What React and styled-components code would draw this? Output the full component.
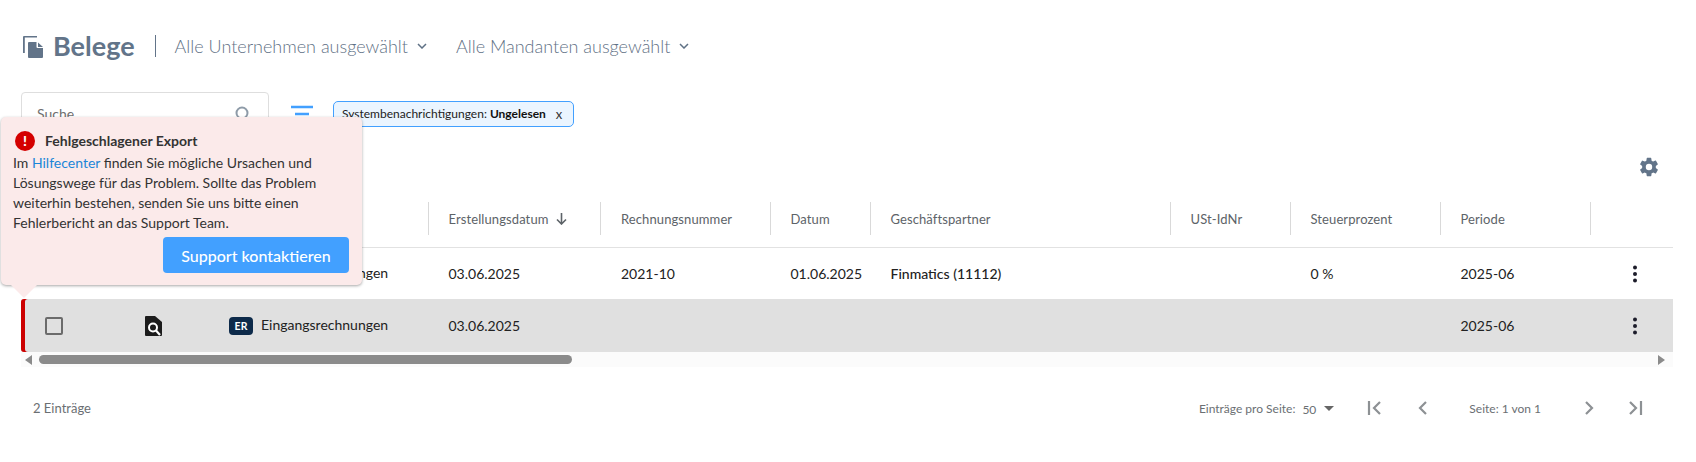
import React from "react";
import styled, { createGlobalStyle } from "styled-components";

const Global = createGlobalStyle`
  html, body { margin: 0; padding: 0; background: #fff; }
  body { font-family: Lato, "Open Sans", sans-serif; overflow: hidden; }
  * { box-sizing: border-box; }
`;

const Page = styled.div`
  position: relative;
  width: 1696px;
  height: 462px;
  padding: 0 23px 0 21px;
`;
const TitleBar = styled.header`
  display: flex;
  align-items: center;
  height: 92px;
  padding-left: 2px;
`;
const TitleIcon = styled.svg`
  width: 21px;
  height: 22px;
  margin: 2px 9px 0 0;
  fill: #627489;
`;
const Title = styled.h1`
  margin: 0 20px 0 0;
  font-size: 27px;
  font-weight: 700;
  color: #627489;
  line-height: 34px;
`;
const Divider = styled.span`
  width: 1px;
  height: 22px;
  background: #627489;
  margin-right: 19px;
`;
const Picker = styled.button`
  display: flex;
  align-items: center;
  gap: 9px;
  border: 0;
  background: none;
  padding: 0;
  margin-right: 29px;
  font: 300 18px Lato, sans-serif;
  color: #5f7185;
`;
const Toolbar = styled.div`
  display: flex;
  align-items: center;
  height: 43px;
`;
const Search = styled.div`
  width: 248px;
  height: 46px;
  margin-top: 2px;
  border: 1px solid #dedede;
  border-radius: 4px;
  display: flex;
  align-items: center;
  justify-content: space-between;
  padding: 0 17px 2px 15px;
  font-size: 14px;
  color: #6f6f6f;
`;
const FilterIcon = styled.svg`
  width: 22px;
  height: 18px;
  margin: 0 20px 0 22px;
`;
const Chip = styled.div`
  display: flex;
  align-items: center;
  height: 26px;
  padding: 0 11px 0 8px;
  border: 1px solid #42a0ff;
  border-radius: 5px;
  background: #ebf5ff;
  font-size: 12px;
  color: #222;
  b { font-weight: 700; margin-left: 3px; color: #111; }
`;
const ChipClose = styled.span`
  margin-left: 10px;
  font-size: 13px;
  color: #333;
`;
const SettingsRow = styled.div`
  display: flex;
  justify-content: flex-end;
  height: 67px;
  padding: 21px 13px 0 0;
`;
const Grid = "407.5px 172.5px 169.5px 100px 300px 120px 150px 150px 82px";
const HeadRow = styled.div`
  display: grid;
  grid-template-columns: ${Grid};
  height: 46px;
  border-bottom: 1.5px solid #e2e2e2;
  align-items: start;
`;
const HeadCell = styled.div`
  height: 33px;
  padding-left: 20px;
  border-right: ${p => (p.$last ? "0" : "1px solid #d9d9d9")};
  display: flex;
  align-items: center;
  gap: 7px;
  font-size: 13px;
  letter-spacing: 0.1px;
  color: #5d6368;
`;
const Row = styled.div`
  display: grid;
  grid-template-columns: ${Grid};
  height: ${p => p.$h}px;
  align-items: center;
  background: ${p => (p.$error ? "#e0e0e0" : "#fff")};
  font-size: 14px;
  color: #222;
  box-shadow: ${p => (p.$error ? "inset 4px 0 0 #cc0000" : "none")};
  border-radius: ${p => (p.$error ? "3px 0 0 3px" : "0")};
`;
const Cell = styled.div`
  padding-left: 20px;
  font-weight: ${p => (p.$strong ? 500 : 400)};
  white-space: nowrap;
`;
const Lead = styled.div`
  display: flex;
  align-items: center;
  height: 100%;
`;
const Check = styled.span`
  width: 18px;
  height: 18px;
  margin-left: 24px;
  border: 2px solid #6b6b6b;
  border-radius: 2px;
`;
const DocIcon = styled.svg`
  width: 17px;
  height: 20px;
  margin-left: 82px;
`;
const Badge = styled.span`
  width: 24px;
  height: 18px;
  margin-left: 67px;
  border-radius: 4px;
  background: #0d2a4a;
  color: #fff;
  font-size: 10.5px;
  font-weight: 700;
  display: flex;
  align-items: center;
  justify-content: center;
`;
const TypeLabel = styled.span`
  margin-left: 8px;
  margin-top: -2px;
`;
const Kebab = styled.svg`
  width: 4px;
  height: 18px;
  margin-left: 42px;
  fill: #1c1c2a;
`;
const ScrollTrack = styled.div`
  display: flex;
  align-items: center;
  height: 15px;
  background: #fbfbfb;
  padding: 0 8px 0 4px;
  justify-content: space-between;
`;
const ScrollArrow = styled.span`
  width: 0;
  height: 0;
  border-top: 5px solid transparent;
  border-bottom: 5px solid transparent;
  ${p => (p.$right ? "border-left: 7px solid #8b8b8b;" : "border-right: 7px solid #8b8b8b;")}
`;
const Thumb = styled.span`
  width: 533px;
  height: 9px;
  margin: 0 auto 0 7px;
  background: #8b8b8b;
  border-radius: 5px;
`;
const Footer = styled.footer`
  display: flex;
  align-items: center;
  justify-content: space-between;
  height: 32px;
  margin-top: 25px;
  padding: 0 30px 0 12px;
  color: #6b6f73;
`;
const Count = styled.span`
  font-size: 13px;
`;
const Pager = styled.div`
  display: flex;
  align-items: center;
  font-size: 12px;
`;
const PageSize = styled.span`
  margin: 3px 8px 0 7px;
  font-size: 12px;
`;
const Caret = styled.span`
  width: 0;
  height: 0;
  margin-right: 33px;
  border-left: 5px solid transparent;
  border-right: 5px solid transparent;
  border-top: 5px solid #666;
`;
const PageIcon = styled.svg`
  width: 16px;
  height: 16px;
  margin: ${p => p.$m};
  fill: none;
  stroke: #8d9194;
  stroke-width: 2.2;
`;
const Popover = styled.aside`
  position: absolute;
  left: 1px;
  top: 117px;
  width: 361px;
  height: 168px;
  padding: 14px 13px 12px 12px;
  background: #fbeaea;
  border-radius: 5px;
  box-shadow: 0 1px 3px rgba(0,0,0,.35);
  color: #333;
  font-size: 14px;
  line-height: 20px;
  &::after {
    content: "";
    position: absolute;
    left: 10px;
    bottom: -13px;
    border-left: 13px solid transparent;
    border-right: 13px solid transparent;
    border-top: 13px solid #fbeaea;
  }
`;
const PopHead = styled.div`
  display: flex;
  align-items: center;
  gap: 10px;
  height: 20px;
  margin-bottom: 2px;
  font-weight: 700;
  color: #333;
`;
const Alert = styled.span`
  width: 20px;
  height: 20px;
  margin-left: 2px;
  border-radius: 50%;
  background: #d40000;
  color: #fff;
  font-weight: 900;
  font-size: 14px;
  display: flex;
  align-items: center;
  justify-content: center;
`;
const HelpLink = styled.a`
  color: #1c86d8;
`;
const ContactButton = styled.button`
  display: block;
  width: 186px;
  height: 36px;
  margin: 4px 0 0 auto;
  border: 0;
  border-radius: 4px;
  background: #42a0ff;
  color: #fff;
  font: 500 16px Lato, sans-serif;
`;

const Chevron = () => (
  <svg width="10" height="6" viewBox="0 0 10 6" fill="none" stroke="#5f7185" strokeWidth="1.5"><path d="M1 1l4 4 4-4" /></svg>
);
const Dots = () => (
  <Kebab viewBox="0 0 4 18"><circle cx="2" cy="2.5" r="2" /><circle cx="2" cy="9" r="2" /><circle cx="2" cy="15.5" r="2" /></Kebab>
);
const Doc = () => (
  <DocIcon viewBox="0 0 17 20">
    <path d="M1 0h9l7 6v13a1 1 0 0 1-1 1H1a1 1 0 0 1-1-1V1a1 1 0 0 1 1-1z" fill="#1c1c1c" />
    <circle cx="8" cy="11.500" r="4" fill="none" stroke="#fff" strokeWidth="2" />
    <path d="M11 14.500l4 4.500" stroke="#fff" strokeWidth="2.200" />
  </DocIcon>
);
const TypeCell = () => (
  <Lead>
    <Check />
    <Doc />
    <Badge>ER</Badge>
    <TypeLabel>Eingangsrechnungen</TypeLabel>
  </Lead>
);

const headers = ["", "Erstellungsdatum", "Rechnungsnummer", "Datum", "Geschäftspartner", "USt-IdNr", "Steuerprozent", "Periode", ""];

export default function App() {
  return (
    <Page>
      <Global />
      <TitleBar>
        <TitleIcon viewBox="0 0 21 22">
          <path d="M1 0h13v1.500H1.800V17H0V1a1 1 0 0 1 1-1z" />
          <path d="M6 6h7.500v5a1 1 0 0 0 1 1H20v9a1 1 0 0 1-1 1H6a1 1 0 0 1-1-1V7a1 1 0 0 1 1-1z" />
          <path d="M15 6.500l5 4.500h-5z" />
        </TitleIcon>
        <Title>Belege</Title>
        <Divider />
        <Picker>Alle Unternehmen ausgewählt <Chevron /></Picker>
        <Picker>Alle Mandanten ausgewählt <Chevron /></Picker>
      </TitleBar>
      <Toolbar>
        <Search>
          Suche
          <svg width="16" height="16" viewBox="0 0 16 16" fill="none" stroke="#8e9ba8" strokeWidth="2"><circle cx="7" cy="7" r="5.500" /><path d="M11 11l4 4" /></svg>
        </Search>
        <FilterIcon viewBox="0 0 22 18">
          <path d="M0 2h22M4 9h14M8 16h6" stroke="#42a0ff" strokeWidth="2.500" />
        </FilterIcon>
        <Chip>
          Systembenachrichtigungen: <b>Ungelesen</b>
          <ChipClose>x</ChipClose>
        </Chip>
      </Toolbar>
      <SettingsRow>
        <svg width="22" height="22" viewBox="0 0 24 24" fill="#627489">
          <path d="M19.400 13c.04-.33.06-.66.06-1s-.02-.67-.06-1l2.110-1.650a.5.5 0 0 0 .12-.64l-2-3.460a.5.5 0 0 0-.61-.22l-2.490 1a7.300 7.300 0 0 0-1.690-.98l-.38-2.650A.49.49 0 0 0 14 2h-4a.49.49 0 0 0-.49.42l-.38 2.650c-.61.25-1.170.59-1.690.98l-2.490-1a.5.5 0 0 0-.61.22l-2 3.460a.49.49 0 0 0 .12.64L4.570 11c-.04.33-.07.67-.07 1s.03.67.07 1l-2.110 1.650a.5.5 0 0 0-.12.64l2 3.460c.12.22.39.3.61.22l2.490-1c.52.4 1.080.73 1.690.98l.38 2.650c.03.24.24.42.49.42h4c.25 0 .46-.18.49-.42l.38-2.650c.61-.25 1.170-.59 1.690-.98l2.490 1c.23.09.49 0 .61-.22l2-3.460a.5.5 0 0 0-.12-.64zM12 15.500a3.500 3.500 0 1 1 0-7 3.500 3.500 0 0 1 0 7z" />
        </svg>
      </SettingsRow>
      <HeadRow>
        {headers.map((h, i) => (
          <HeadCell key={i} $last={i === 8}>
            {h}
            {i === 1 && (
              <svg width="11" height="12" viewBox="0 0 11 12" fill="none" stroke="#5d6368" strokeWidth="1.6"><path d="M5.500 0v11M1 6.500l4.500 4.500L10 6.500" /></svg>
            )}
          </HeadCell>
        ))}
      </HeadRow>
      <Row $h={51}>
        <TypeCell />
        <Cell>03.06.2025</Cell>
        <Cell>2021-10</Cell>
        <Cell>01.06.2025</Cell>
        <Cell $strong>Finmatics (11112)</Cell>
        <Cell />
        <Cell>0 %</Cell>
        <Cell>2025-06</Cell>
        <Dots />
      </Row>
      <Row $h={53} $error>
        <TypeCell />
        <Cell>03.06.2025</Cell>
        <Cell />
        <Cell />
        <Cell />
        <Cell />
        <Cell />
        <Cell>2025-06</Cell>
        <Dots />
      </Row>
      <ScrollTrack>
        <ScrollArrow />
        <Thumb />
        <ScrollArrow $right />
      </ScrollTrack>
      <Footer>
        <Count>2 Einträge</Count>
        <Pager>
          Einträge pro Seite:
          <PageSize>50</PageSize>
          <Caret />
          <PageIcon $m="0 32px 0 0" viewBox="0 0 16 16"><path d="M2 1v14M13 2L7 8l6 6" /></PageIcon>
          <PageIcon $m="0 38px 0 0" viewBox="0 0 16 16"><path d="M11 2L5 8l6 6" /></PageIcon>
          Seite: 1 von 1
          <PageIcon $m="0 30px 0 40px" viewBox="0 0 16 16"><path d="M5 2l6 6-6 6" /></PageIcon>
          <PageIcon $m="0" viewBox="0 0 16 16"><path d="M3 2l6 6-6 6M14 1v14" /></PageIcon>
        </Pager>
      </Footer>
      <Popover>
        <PopHead><Alert>!</Alert>Fehlgeschlagener Export</PopHead>
        Im <HelpLink>Hilfecenter</HelpLink> finden Sie mögliche Ursachen und<br />
        Lösungswege für das Problem. Sollte das Problem<br />
        weiterhin bestehen, senden Sie uns bitte einen<br />
        Fehlerbericht an das Support Team.
        <ContactButton>Support kontaktieren</ContactButton>
      </Popover>
    </Page>
  );
}
